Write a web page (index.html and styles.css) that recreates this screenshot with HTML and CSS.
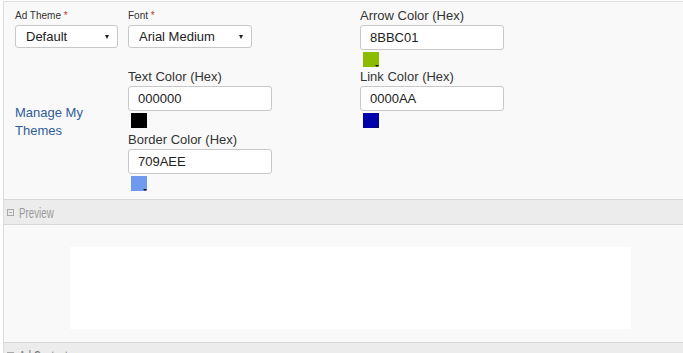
FILE: index.html
```html
<!DOCTYPE html>
<html lang="en">
<head>
    <meta charset="UTF-8">
    <title>Ad Theme</title>
    <link rel="stylesheet" href="styles.css">
</head>
<body>
    <div class="panel">
        <div class="theme-form">
            <div class="field">
                <label class="small-label">Ad Theme <span class="req">*</span></label>
                <div class="select-wrap theme-select">
                    <select><option>Default</option></select>
                </div>
            </div>
            <div class="field">
                <label class="small-label">Font <span class="req">*</span></label>
                <div class="select-wrap font-select">
                    <select><option>Arial Medium</option></select>
                </div>
            </div>
            <div class="field">
                <label class="color-label">Arrow Color (Hex)</label>
                <input class="hex" type="text" value="8BBC01">
                <span class="swatch" style="background:#8bbc01"></span>
            </div>

            <div class="field manage">
                <a href="#">Manage My<br>Themes</a>
            </div>
            <div class="field">
                <label class="color-label">Text Color (Hex)</label>
                <input class="hex" type="text" value="000000">
                <span class="swatch" style="background:#000000"></span>
                <label class="color-label">Border Color (Hex)</label>
                <input class="hex" type="text" value="709AEE">
                <span class="swatch" style="background:#709aee"></span>
            </div>
            <div class="field">
                <label class="color-label">Link Color (Hex)</label>
                <input class="hex" type="text" value="0000AA">
                <span class="swatch" style="background:#0000aa"></span>
            </div>
        </div>

        <div class="section-bar">
            <span class="toggle"></span>
            <span class="section-title">Preview</span>
        </div>
        <div class="preview">
            <div class="preview-box"></div>
        </div>

        <div class="section-bar">
            <span class="toggle"></span>
            <span class="section-title dark">Ad Content</span>
        </div>
    </div>
</body>
</html>
```

FILE: styles.css
```css
html, body { margin: 0; padding: 0; background: #fff; }
body { font-family: "Liberation Sans", Arial, sans-serif; font-size: 13px; color: #333; }

.panel { margin: 1px 0 0 3px; border-left: 1px solid #dcdcdc; border-top: 1px solid #dcdcdc; background: #f9f9f9; height: 400px; }

.theme-form { display: grid; grid-template-columns: 113px 232px 1fr; row-gap: 2px; align-items: start; padding: 6px 0 8px 11px; }
.field { display: flex; flex-direction: column; align-items: flex-start; }

.small-label { font-size: 10px; line-height: 15px; color: #333; margin-bottom: 2px; }
.req { color: #c0392b; }
.color-label { font-size: 13px; line-height: 15px; color: #333; margin-bottom: 2px; }
.swatch + .color-label { margin-top: 4px; }

.select-wrap { position: relative; height: 23px; }
.select-wrap select { appearance: none; -webkit-appearance: none; width: 100%; height: 23px; border: 1px solid #c8c8c8; border-radius: 3px; background: #fff; font-family: "Liberation Sans", Arial, sans-serif; font-size: 13px; color: #222; padding: 0 0 0 10px; }
.select-wrap::after { content: ""; position: absolute; right: 9px; top: 10px; border-left: 2px solid transparent; border-right: 2px solid transparent; border-top: 4px solid #222; }
.theme-select { width: 103px; }
.font-select { width: 124px; }

.hex { box-sizing: border-box; width: 144px; height: 25px; border: 1px solid #c8c8c8; border-radius: 3px; background: #fff; font-family: "Liberation Sans", Arial, sans-serif; font-size: 13px; color: #222; padding: 0 0 0 9px; margin: 0 0 2px; }

.swatch { position: relative; display: block; width: 16px; height: 15px; margin-left: 3px; }
.swatch::after { content: ""; position: absolute; right: 0; bottom: 0; border-left: 2px solid transparent; border-right: 2px solid transparent; border-top: 2px solid #111; }

.manage { padding-top: 35px; }
.manage a { color: #2f5d99; text-decoration: none; line-height: 18px; font-size: 13px; }

.section-bar { display: flex; align-items: center; height: 24px; background: #ececec; border-top: 1px solid #d8d8d8; border-bottom: 1px solid #d8d8d8; padding-left: 3px; }
.toggle { box-sizing: border-box; width: 7px; height: 7px; border: 1px solid #a8a8a8; position: relative; margin-right: 5px; }
.toggle::after { content: ""; position: absolute; left: 1px; right: 1px; top: 2px; height: 1px; background: #a8a8a8; }
.section-title { font-family: "Liberation Sans", Arial, sans-serif; font-size: 15px; color: #9a9a9a; transform: scaleX(0.65); transform-origin: left center; }
.section-title.dark { color: #777; }

.preview { padding: 22px 0 13px 66px; }
.preview-box { width: 561px; height: 82px; background: #fff; }
```
